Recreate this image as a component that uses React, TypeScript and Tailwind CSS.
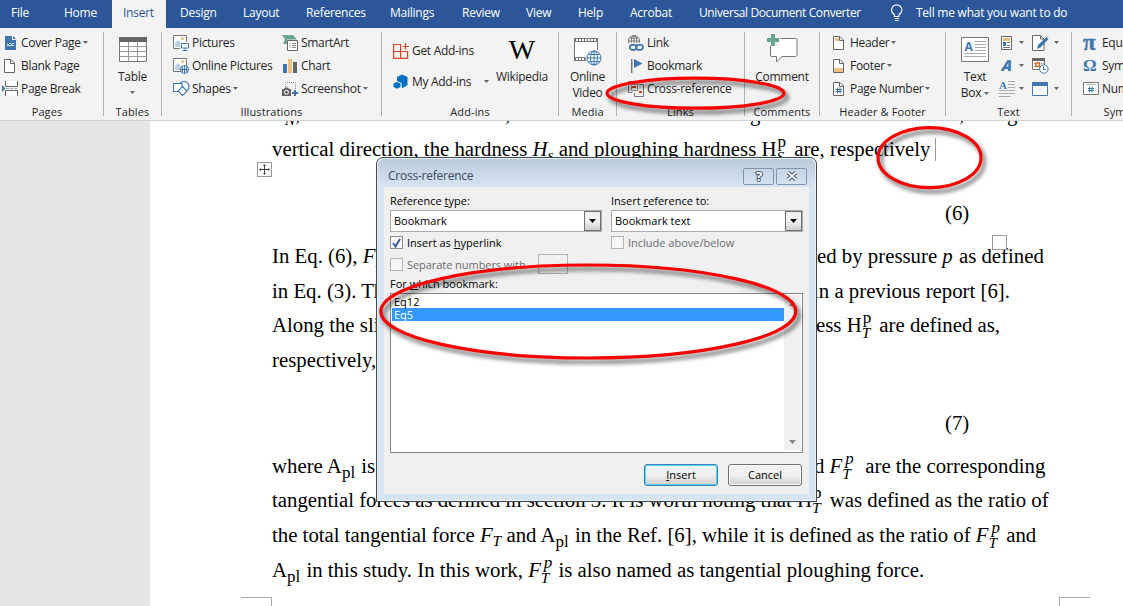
import type { ReactNode } from 'react';

const tabs = [
  { name: 'File', cls: 'pl-[11px] w-[53px]' },
  { name: 'Home', cls: 'pl-[11px] w-[59px]' },
  { name: 'Insert', cls: 'pl-[11px] w-[54px] bg-[#f3f3f3] text-[#2b579a]' },
  { name: 'Design', cls: 'pl-[14px] w-[63px]' },
  { name: 'Layout', cls: 'pl-[14px] w-[63px]' },
  { name: 'References', cls: 'pl-[14px] w-[84px]' },
  { name: 'Mailings', cls: 'pl-[14px] w-[72px]' },
  { name: 'Review', cls: 'pl-[14px] w-[64px]' },
  { name: 'View', cls: 'pl-[14px] w-[52px]' },
  { name: 'Help', cls: 'pl-[14px] w-[52px]' },
  { name: 'Acrobat', cls: 'pl-[14px] w-[69px]' },
  { name: 'Universal Document Converter', cls: 'pl-[14px] w-[205px] tracking-[-0.032em]' },
];

function Caret({ className = '' }: { className?: string }) {
  return (
    <svg width="5" height="3" viewBox="0 0 5 3" className={`shrink-0 ${className}`}>
      <path d="M0 0h5L2.5 3z" fill="#666" />
    </svg>
  );
}

/* ---------- ribbon icons ---------- */

function CoverPageIcon() {
  return (
    <svg width="16" height="16" viewBox="0 0 16 16">
      <path d="M3 1h7v4h4v10H3z" fill="#3e76b0" />
      <path d="M11 1l3 3h-3z" fill="#3e76b0" />
      <path d="M5 8.500l1.500 1L8 8l1.500 1.500L11 8l1 1M5 10.500h7" stroke="#fff" strokeWidth=".8" fill="none" />
    </svg>
  );
}

function PageIcon({ kind }: { kind?: 'header' | 'footer' | 'number' }) {
  return (
    <svg width="16" height="16" viewBox="0 0 16 16">
      <path d="M2.500 1.500h6.500l3.500 3.500v9.500h-10z" fill="#fff" stroke="#666" />
      <path d="M8.500 1.500v4h4" fill="none" stroke="#666" />
      {kind === 'header' && <path d="M4 3h4v3H4z" fill="#eac282" />}
      {kind === 'footer' && <path d="M3 10h9v4H3z" fill="#eac282" />}
      {kind === 'number' && <path d="M6.500 6.500v6M9 6.500v6M4.500 8.500h6.500M4.500 10.500h6.500" stroke="#3e76b0" />}
    </svg>
  );
}

function PageBreakIcon() {
  return (
    <svg width="17" height="17" viewBox="0 0 17 17">
      <path d="M3.500 1v5.500h12V1M3.500 16v-5.500h12V16" fill="#fff" stroke="#666" />
      <path d="M4 8.500h12" stroke="#aaa" strokeDasharray="3 1" />
      <path d="M0 5l3.500 3.500L0 12z" fill="#3e76b0" />
    </svg>
  );
}

function TableIcon() {
  return (
    <svg width="28" height="25" viewBox="0 0 28 25">
      <path d="M.5.5h27v24H.5z" fill="#fff" stroke="#777" />
      <path d="M0 0h28v5H0z" fill="#666" />
      <path d="M1 9.500h26M1 14.500h26M1 19.500h26M9.500 5v19M18.500 5v19" stroke="#999" />
    </svg>
  );
}

function PictureIcon({ online }: { online?: boolean }) {
  return (
    <svg width="16" height="16" viewBox="0 0 16 16">
      <path d="M.5.5h13v13H.5z" fill="#fff" stroke="#777" />
      <circle cx="9.500" cy="3.500" r="1.600" fill="#eac282" />
      <path d="M2 12V8l3-3 3 3v4z" fill="#b9cfe4" />
      {online ? (
        <g fill="#fff" stroke="#3e76b0">
          <circle cx="11.500" cy="11.500" r="4" />
          <path d="M7.500 11.500h8M11.500 7.500v8M9 8.500q2 3 0 6M14 8.500q-2 3 0 6" fill="none" />
        </g>
      ) : (
        <g fill="#fff" stroke="#3e76b0">
          <path d="M7 7h9v9H7z" stroke="none" />
          <path d="M8.500 8.500h7v4.500h-7z" />
          <path d="M12 13v2.500M9.500 15.500h5" />
        </g>
      )}
    </svg>
  );
}

function ShapesIcon() {
  return (
    <svg width="17" height="16" viewBox="0 0 17 16" fill="#fff" stroke="#3e76b0" strokeWidth="1.100">
      <circle cx="11" cy="5.500" r="5" />
      <path d="M.5 2.500h8.500v8H.5z" />
      <path d="M9.500 5.500l4.500 4.500-4.500 4.500L5 10z" />
    </svg>
  );
}

function SmartArtIcon() {
  return (
    <svg width="16" height="16" viewBox="0 0 16 16">
      <path d="M0 0h11l4 4.500H5V9H1l2-4.500z" fill="#6aa58e" />
      <path d="M5.500 5.500h10v10h-10z" fill="#fff" stroke="#666" />
      <path d="M7.500 8.500h1M10 8.500h4M7.500 12.500h1M10 12.500h4M7.500 10.500h1M10 10.500h4" stroke="#888" />
    </svg>
  );
}

function ChartIcon() {
  return (
    <svg width="16" height="16" viewBox="0 0 16 16">
      <path d="M1 6h4v9H1z" fill="#3e76b0" />
      <path d="M6 1h4v14H6z" fill="#eac282" />
      <path d="M11 4h4v11h-4z" fill="#666" />
    </svg>
  );
}

function ScreenshotIcon() {
  return (
    <svg width="16" height="16" viewBox="0 0 16 16">
      <path d="M3.500 6V1.500h10V9" fill="none" stroke="#888" strokeDasharray="1 1" />
      <path d="M0 8h2l1-1.500h3L7 8h2v7H0z" fill="#666" />
      <circle cx="4.500" cy="11.300" r="2" fill="#666" stroke="#fff" />
      <path d="M13 9v6M10 12h6" stroke="#3e76b0" strokeWidth="2" />
    </svg>
  );
}

function GetAddinsIcon() {
  return (
    <svg width="16" height="16" viewBox="0 0 16 16" fill="none" stroke="#d24726" strokeWidth="1.200">
      <path d="M.6 1.500h7v7h-7zM.6 8.500h7v6.900h-7zM7.600 8.500h7v6.900h-7zM12.500 0v6.500M9.500 3.500H16" />
    </svg>
  );
}

function MyAddinsIcon() {
  return (
    <svg width="16" height="16" viewBox="0 0 16 16" fill="#0072c6">
      <path d="M9 .5l5.500 2.500v8L9 14.500 8.500 9 4 7V3z" />
      <path d="M.5 9.500l3.500-1.500 3.500 1.500V13L4 14.800.5 13z" />
    </svg>
  );
}

function OnlineVideoIcon() {
  return (
    <svg width="29" height="29" viewBox="0 0 29 29">
      <path d="M1.500 1.500h23v22h-23z" fill="#fff" stroke="#777" />
      <path d="M1 3h24M1 22h12" stroke="#777" strokeWidth="4" />
      <path d="M3 3h21M3 22h9" stroke="#fff" strokeWidth="2" strokeDasharray="2 1" />
      <g fill="#fff" stroke="#3e76b0">
        <circle cx="21" cy="21" r="8.500" fill="#f3f3f3" stroke="none" />
        <circle cx="21" cy="21" r="7" />
        <path d="M14 21h14M21 14v14M15.500 17.500h11M15.500 24.500h11" fill="none" />
        <ellipse cx="21" cy="21" rx="3.500" ry="7" fill="none" />
      </g>
    </svg>
  );
}

function LinkIcon() {
  return (
    <svg width="16" height="16" viewBox="0 0 16 16" fill="none">
      <g stroke="#777">
        <circle cx="6" cy="6" r="5.500" fill="#fff" />
        <path d="M.5 6h11M6 .5v11M1.500 3.200h9M1.500 8.800h4" />
        <ellipse cx="6" cy="6" rx="2.800" ry="5.500" />
      </g>
      <path d="M1 8h15v8H1z" fill="#f3f3f3" />
      <rect x="1.800" y="9.800" width="7" height="5" rx="2.500" stroke="#3e76b0" strokeWidth="1.700" />
      <rect x="8" y="9.800" width="7" height="5" rx="2.500" stroke="#3e76b0" strokeWidth="1.700" />
    </svg>
  );
}

function BookmarkIcon() {
  return (
    <svg width="16" height="16" viewBox="0 0 16 16">
      <path d="M3.700 1v14" stroke="#777" strokeWidth="1.500" />
      <path d="M6 1l8.500 4.500L6 10z" fill="#3e76b0" />
    </svg>
  );
}

function CrossReferenceIcon() {
  return (
    <svg width="16" height="16" viewBox="0 0 16 16">
      <path d="M4.500 11.500h-4V.500h10v2" fill="none" stroke="#777" />
      <path d="M3.500 3.500h6v6h-6z" fill="#fff" stroke="#999" />
      <path d="M10.500 3.500h5v12h-9V12" fill="none" stroke="#777" />
      <path d="M4 5h4v2H4zM11 10h3v2h-3z" fill="#d24726" />
    </svg>
  );
}

function CommentIcon() {
  return (
    <svg width="31" height="30" viewBox="0 0 31 30">
      <path d="M3.500 5.500q0-1 1-1h24q1.500 0 1.500 1.500v15q0 1.500-1.500 1.500H15L9.500 28v-5.500H5q-1.500 0-1.500-1.500z" fill="#fff" stroke="#777" />
      <path d="M0 3h13v9H0z" fill="#f3f3f3" />
      <path d="M4 0h4v4h4v4H8v4H4V8H0V4h4z" fill="#6aa58e" />
    </svg>
  );
}

function TextBoxIcon() {
  return (
    <svg width="28" height="25" viewBox="0 0 28 25">
      <path d="M.5.5h27v24H.5z" fill="#fff" stroke="#777" />
      <path d="M14 4.500h11M14 7.500h11M14 10.500h11M14 13.500h11M3 16.500h22M3 19.500h22" stroke="#aaa" />
      <text x="3.500" y="13.500" fontSize="12" fontWeight="700" fill="#3e76b0" className="font-['Open_Sans']">A</text>
    </svg>
  );
}

function QuickPartsIcon() {
  return (
    <svg width="16" height="16" viewBox="0 0 16 16">
      <path d="M2.500 1.500h10v13h-10z" fill="#fff" stroke="#666" />
      <path d="M4 3h7v3H4z" fill="#eac282" />
      <path d="M4 7h3v4H4z" fill="#3e76b0" />
      <path d="M8 7.500h3M8 10.500h3M4 12.500h7" stroke="#777" />
    </svg>
  );
}

function DropCapIcon() {
  return (
    <svg width="16" height="17" viewBox="0 0 16 17">
      <path d="M9 1.500h7M9 4.500h7M9 7.500h7M0 10.500h16M0 13.500h16M0 16.500h12" stroke="#aaa" />
      <text x="0" y="8.500" fontSize="11" fontWeight="700" fill="#3e76b0" className="font-['Liberation_Serif']">A</text>
    </svg>
  );
}

function SignatureIcon() {
  return (
    <svg width="17" height="16" viewBox="0 0 17 16">
      <path d="M.5.500h8l3.500 3.500v11.500H.5z" fill="#fff" stroke="#666" />
      <path d="M8.500.500V4H12" fill="none" stroke="#666" />
      <path d="M5 14l1-4 8.500-8 2 2L8.500 12.500z" fill="#3e76b0" />
    </svg>
  );
}

function DateTimeIcon() {
  return (
    <svg width="17" height="17" viewBox="0 0 17 17">
      <path d="M.5 1.500h12v11H.5z" fill="#fff" stroke="#777" />
      <path d="M0 1h13v3H0z" fill="#666" />
      <path d="M2 6.500h2M2 9.500h2M9 6.500h3" stroke="#999" strokeDasharray="1 1" />
      <path d="M4 6h3.500v3.500H4z" fill="none" stroke="#d9631e" strokeWidth="1.500" />
      <circle cx="11.800" cy="12" r="4.200" fill="#fff" stroke="#3e76b0" />
      <path d="M11.500 9.500v3h2.500" fill="none" stroke="#3e76b0" />
    </svg>
  );
}

function ObjectIcon() {
  return (
    <svg width="17" height="14" viewBox="0 0 17 14">
      <path d="M.5.500h15v13H.5z" fill="#fff" stroke="#3e76b0" />
      <path d="M0 0h16v4H0z" fill="#3e76b0" />
    </svg>
  );
}

function NumberIcon() {
  return (
    <svg width="16" height="13" viewBox="0 0 16 13">
      <path d="M.5.500h15v12H.5z" fill="#fff" stroke="#777" />
      <path d="M3 2.500h10" stroke="#bbb" />
      <path d="M6.500 4.500v6M9 4.500v6M5 6.500h6M5 8.500h6" stroke="#3e76b0" />
    </svg>
  );
}

/* ---------- ribbon layout ---------- */

interface RibbonGroupProps {
  label: string;
  width: string;
  children: ReactNode;
  labelCls?: string;
}

function RibbonGroup({ label, width, children, labelCls = '' }: RibbonGroupProps) {
  return (
    <div className={`flex shrink-0 ${width}`}>
      <div className="flex min-w-0 flex-1 flex-col">
        <div className="flex h-[76px] pt-[3px]">{children}</div>
        <div className={`h-4 whitespace-nowrap text-center text-[11px] leading-4 tracking-[0.01em] ${labelCls}`}>{label}</div>
      </div>
      <div className="mt-1 h-[84px] w-px bg-[#b1b1b1]" />
    </div>
  );
}

interface CommandProps {
  icon: ReactNode;
  label: string;
  caret?: boolean;
}

function Command({ icon, label, caret }: CommandProps) {
  return (
    <div className="flex h-[23px] items-center whitespace-nowrap">
      <span className="flex w-[19px] shrink-0">{icon}</span>
      <span>{label}</span>
      {caret && <Caret className="ml-[2px]" />}
    </div>
  );
}

function Ribbon() {
  return (
    <div className="flex h-[93px] overflow-hidden border-b border-[#d2d2d2] bg-[#f3f3f3] text-[12px] tracking-[-0.025em] text-[#262626]">
      <RibbonGroup label="Pages" width="w-[104px]" labelCls="pr-[9px]">
        <div className="flex flex-col pl-[2px]">
          <Command icon={<CoverPageIcon />} label="Cover Page" caret />
          <Command icon={<PageIcon />} label="Blank Page" />
          <Command icon={<PageBreakIcon />} label="Page Break" />
        </div>
      </RibbonGroup>
      <RibbonGroup label="Tables" width="w-[58px]">
        <div className="flex w-full flex-col items-center pt-[6px]">
          <TableIcon />
          <span className="mt-[7px] leading-4">Table</span>
          <Caret className="mt-[6px]" />
        </div>
      </RibbonGroup>
      <RibbonGroup label="Illustrations" width="w-[220px]">
        <div className="flex w-[109px] flex-col pl-[11px]">
          <Command icon={<PictureIcon />} label="Pictures" />
          <Command icon={<PictureIcon online />} label="Online Pictures" />
          <Command icon={<ShapesIcon />} label="Shapes" caret />
        </div>
        <div className="flex flex-col pl-[11px]">
          <Command icon={<SmartArtIcon />} label="SmartArt" />
          <Command icon={<ChartIcon />} label="Chart" />
          <Command icon={<ScreenshotIcon />} label="Screenshot" caret />
        </div>
      </RibbonGroup>
      <RibbonGroup label="Add-ins" width="w-[177px]">
        <div className="flex w-[114px] flex-col gap-2 pl-[11px] pt-2">
          <Command icon={<GetAddinsIcon />} label="Get Add-ins" />
          <div className="flex items-center">
            <Command icon={<MyAddinsIcon />} label="My Add-ins" />
            <Caret className="ml-[13px]" />
          </div>
        </div>
        <div className="flex flex-col items-center pt-[2px]">
          <span className="font-['Liberation_Serif'] text-[28px] leading-[34px] tracking-normal text-black">W</span>
          <span className="mt-[2px] leading-4">Wikipedia</span>
        </div>
      </RibbonGroup>
      <RibbonGroup label="Media" width="w-[58px]">
        <div className="flex w-full flex-col items-center pt-[6px]">
          <OnlineVideoIcon />
          <span className="mt-[3px] text-center leading-4">
            Online
            <br />
            Video
          </span>
        </div>
      </RibbonGroup>
      <RibbonGroup label="Links" width="w-[128px]">
        <div className="flex flex-col pl-[11px]">
          <Command icon={<LinkIcon />} label="Link" />
          <Command icon={<BookmarkIcon />} label="Bookmark" />
          <Command icon={<CrossReferenceIcon />} label="Cross-reference" />
        </div>
      </RibbonGroup>
      <RibbonGroup label="Comments" width="w-[75px]">
        <div className="flex w-full flex-col items-center pt-[3px]">
          <CommentIcon />
          <span className="mt-[5px] leading-4">Comment</span>
        </div>
      </RibbonGroup>
      <RibbonGroup label="Header & Footer" width="w-[126px]">
        <div className="flex flex-col pl-[11px]">
          <Command icon={<PageIcon kind="header" />} label="Header" caret />
          <Command icon={<PageIcon kind="footer" />} label="Footer" caret />
          <Command icon={<PageIcon kind="number" />} label="Page Number" caret />
        </div>
      </RibbonGroup>
      <RibbonGroup label="Text" width="w-[126px]">
        <div className="flex w-[53px] flex-col items-center pl-[5px] pt-[6px]">
          <TextBoxIcon />
          <span className="mt-[7px] leading-4">Text</span>
          <span className="flex items-center leading-4">
            Box
            <Caret className="ml-[3px]" />
          </span>
        </div>
        <div className="flex w-[33px] flex-col">
          <div className="flex h-[23px] items-center gap-1">
            <QuickPartsIcon />
            <Caret />
          </div>
          <div className="flex h-[23px] items-center gap-1">
            <span className="w-4 -skew-x-6 text-center text-[15px] font-extrabold italic text-[#3e76b0]">A</span>
            <Caret />
          </div>
          <div className="flex h-[23px] items-center gap-1">
            <DropCapIcon />
            <Caret />
          </div>
        </div>
        <div className="flex flex-col">
          <div className="flex h-[23px] items-center gap-[5px]">
            <SignatureIcon />
            <Caret />
          </div>
          <div className="flex h-[23px] items-center">
            <DateTimeIcon />
          </div>
          <div className="flex h-[23px] items-center gap-[5px]">
            <ObjectIcon />
            <Caret />
          </div>
        </div>
      </RibbonGroup>
      <RibbonGroup label="Symbols" width="w-[104px]" labelCls="pl-1">
        <div className="flex flex-col pl-[11px]">
          <Command
            icon={<span className="font-['Liberation_Serif'] text-[23px] font-bold leading-4 text-[#3e76b0] [-webkit-text-stroke:0.4px_#3e76b0]">π</span>}
            label="Equation"
            caret
          />
          <Command
            icon={<span className="font-['Liberation_Serif'] text-[17px] font-bold leading-4 text-[#3e76b0]">Ω</span>}
            label="Symbol"
            caret
          />
          <Command icon={<NumberIcon />} label="Number" />
        </div>
      </RibbonGroup>
    </div>
  );
}

function TabBar() {
  return (
    <div className="flex h-7 overflow-hidden bg-[#2b579a] text-[12px] tracking-[-0.02em] text-white">
      {tabs.map((tab) => (
        <div key={tab.name} className={`shrink-0 whitespace-nowrap leading-[26px] ${tab.cls}`}>
          {tab.name}
        </div>
      ))}
      <svg width="14" height="18" viewBox="0 0 14 18" className="mt-1 shrink-0" fill="none" stroke="#fff" strokeWidth="1.200">
        <path d="M4.500 12.500V11Q1.500 8.500 1.500 6a5.200 5.200 0 0 1 10.400 0q0 2.500-3 5v1.500zM4.500 14.500h4.500M5 16.500h3.500" />
      </svg>
      <div className="ml-3 shrink-0 whitespace-nowrap leading-[26px]">Tell me what you want to do</div>
    </div>
  );
}

/* ---------- document ---------- */

interface SymProps {
  base: string;
  sub?: string;
  sup?: string;
  upright?: boolean;
}

// Math symbol with stacked super- and subscript
function Sym({ base, sub, sup, upright }: SymProps) {
  return (
    <span className="inline-flex items-baseline">
      <span className={upright ? '' : 'italic'}>{base}</span>
      <span className={`relative text-[15.500px] ${sup ? 'min-w-[12.500px]' : ''}`}>
        <span className={`relative italic ${sup ? 'top-[6px]' : 'top-[4px]'}`}>{sub}</span>
        {sup && (
          <span className={`absolute -top-[9px] ${upright ? 'left-px text-[17px]' : 'left-[3px] text-[17px] italic'}`}>{sup}</span>
        )}
      </span>
    </span>
  );
}

function Apl() {
  return (
    <span>
      A<span className="relative top-[5px] pr-px text-[17px]">pl</span>
    </span>
  );
}

// Left part runs under the dialog, right part comes out on its other side
function Line({ left, right }: { left?: ReactNode; right?: ReactNode }) {
  return (
    <div className="flex h-[34.700px] whitespace-pre leading-[34.700px]">
      <div className="w-[545px] shrink-0">{left}</div>
      <div>{right}</div>
    </div>
  );
}

function DocumentPage() {
  return (
    <div className="relative flex h-[485px] overflow-hidden bg-[#e6e6e6]">
      <div className="ml-[150px] flex-1 bg-white pl-[122px] font-['Liberation_Serif','Times_New_Roman',serif] text-[20.800px] text-black">
        <div className="-mt-[24px] flex h-[34.700px] whitespace-pre leading-[34.700px]">
          <span className="w-[233px]"><Sym base="F" sub="N" />,</span>
          <span className="w-[245px]">,</span>
          <span className="w-[209px]">g</span>
          <span className="w-[48px]">,</span>
          <span>g</span>
        </div>
        <div className="flex h-[34.700px] whitespace-pre leading-[34.700px]">
          <span>
            vertical direction, the hardness <Sym base="H" sub="s" /> and ploughing hardness <Sym base="H" sub="S" sup="p" upright /> are, respectively
          </span>
          <span className="ml-[5px] mt-[6px] h-[23px] w-px bg-[#999]" />
        </div>
        <div className="mt-[30px] h-[34.700px] pl-[673px] leading-[34.700px]">(6)</div>
        <div className="h-[8px]" />
        <Line left={<>In Eq. (6), <Sym base="F" sub="N" /></>} right={<>ed by pressure <i className="pr-px">p</i> as defined</>} />
        <Line left="in Eq. (3). The" right={<span className="-ml-1">in a previous report [6].</span>} />
        <Line left="Along the sliding" right={<span className="-ml-px">ess <Sym base="H" sub="T" sup="p" upright /> are defined as,</span>} />
        <Line left="respectively," />
        <div className="mt-[28px] h-[34.700px] pl-[673px] leading-[34.700px]">(7)</div>
        <div className="h-[8px]" />
        <Line left={<>where <Apl /> is</>} right={<span className="-ml-[3px]">d <Sym base="F" sub="T" sup="p" />  are the corresponding</span>} />
        <div className="h-[34.700px] whitespace-pre leading-[34.700px]">
          tangential forces as defined in section 3. It is worth noting that <Sym base="H" sub="T" sup="p" upright /> was defined as the ratio of
        </div>
        <div className="h-[34.700px] whitespace-pre leading-[34.700px]">
          the total tangential force <Sym base="F" sub="T" /> and <Apl /> in the Ref. [6], while it is defined as the ratio of <Sym base="F" sub="T" sup="p" /> and
        </div>
        <div className="h-[34.700px] whitespace-pre leading-[34.700px]">
          <Apl /> in this study. In this work, <Sym base="F" sub="T" sup="p" /> is also named as tangential ploughing force.
        </div>
      </div>

      {/* table handles */}
      <div className="absolute left-[257px] top-[41px] flex size-[15px] items-center justify-center border border-[#999] bg-white">
        <svg width="11" height="11" viewBox="0 0 11 11" stroke="#444" fill="#444">
          <path d="M5.500 1v9M1 5.500h9" />
          <path d="M5.500 0l1.500 2H4zM5.500 11L4 9h3zM0 5.500L2 4v3zM11 5.500L9 7V4z" stroke="none" />
        </svg>
      </div>
      <div className="absolute left-[992px] top-[114px] size-[15px] border border-[#999] bg-white" />

      {/* margin corners */}
      <div className="absolute bottom-0 left-[241px] h-[9px] w-[31px] border-r border-t border-[#aaa]" />
      <div className="absolute bottom-0 left-[1059px] h-[9px] w-[31px] border-l border-t border-[#aaa]" />
    </div>
  );
}

/* ---------- dialog ---------- */

function Combo({ value, width }: { value: string; width: string }) {
  return (
    <div className={`flex h-[22px] items-stretch border border-[#abadb3] bg-white ${width}`}>
      <span className="flex-1 pl-[3px] leading-5">{value}</span>
      <span className="flex w-[17px] items-center justify-center border border-[#707070] bg-linear-to-b from-[#f2f2f2] from-50% to-[#cfcfcf]">
        <svg width="7" height="4" viewBox="0 0 7 4">
          <path d="M0 0h7L3.500 4z" />
        </svg>
      </span>
    </div>
  );
}

function Check({ label, checked }: { label: ReactNode; checked?: boolean }) {
  return (
    <div className={`flex h-[15px] items-center leading-[15px] ${checked ? 'text-black' : 'text-[#6d6d6d]'}`}>
      <span className={`mr-1 flex size-[13px] items-center justify-center border bg-[#f6f6f6] ${checked ? 'border-[#8e8f8f]' : 'border-[#b5b5b5]'}`}>
        {checked && (
          <svg width="9" height="10" viewBox="0 0 9 10">
            <path d="M1 5l2.500 3.500L8 1" fill="none" stroke="#3f5a9c" strokeWidth="2" />
          </svg>
        )}
      </span>
      {label}
    </div>
  );
}

function CrossReferenceDialog() {
  return (
    <div className="absolute left-[376px] top-[157px] flex h-[345px] w-[441px] flex-col rounded-t-[7px] border border-[#3f474f] bg-[#d7e4f2] px-[7px] pb-[7px] text-[11px] text-black shadow-[inset_0_0_0_1px_#e9f1f9]">
      <div className="-mx-[6px] mt-px flex h-[28px] items-center rounded-t-[6px] bg-linear-to-b from-[#bccbdb] to-[#d7e4f2] pl-[10px] pr-[8px] text-[12px] text-[#3b4d5f]">
        <span className="flex-1 pt-[5px] tracking-[-0.02em]">Cross-reference</span>
        <span className="mr-[2px] mt-[6px] flex h-[17px] w-[31px] items-center justify-center rounded-[2px] border border-[#8395ad]">
          <svg width="12" height="14" viewBox="0 0 12 14">
            <text
              x="6"
              y="11.500"
              textAnchor="middle"
              fontSize="13"
              fontWeight="700"
              fill="#fff"
              stroke="#4b5a70"
              strokeWidth="2"
              paintOrder="stroke"
            >
              ?
            </text>
          </svg>
        </span>
        <span className="mt-[6px] flex h-[17px] w-[31px] items-center justify-center rounded-[2px] border border-[#8395ad]">
          <svg width="12" height="10" viewBox="0 0 12 10">
            <path d="M2 1.500l8 7M10 1.500l-8 7" stroke="#4b5a70" strokeWidth="4" />
            <path d="M2 1.500l8 7M10 1.500l-8 7" stroke="#fff" strokeWidth="1.800" />
          </svg>
        </span>
      </div>

      <div className="flex flex-1 flex-col bg-[#f0f0f0] pl-[6px] pr-[6px] pt-[6px]">
        <div className="flex">
          <div className="flex w-[221px] flex-col">
            <div className="h-[17px] leading-4">Reference <u>t</u>ype:</div>
            <Combo value="Bookmark" width="w-[212px]" />
            <div className="mt-[3px]">
              <Check checked label={<span>Insert as <u>h</u>yperlink</span>} />
            </div>
            <div className="mt-[4px] flex items-center">
              <div className="w-[148px] tracking-[-0.005em]">
                <Check label="Separate numbers with" />
              </div>
              <span className="h-[20px] w-[30px] border border-[#b5b5b5]" />
            </div>
          </div>
          <div className="flex flex-col">
            <div className="h-[17px] leading-4">Insert <u>r</u>eference to:</div>
            <Combo value="Bookmark text" width="w-[192px]" />
            <div className="mt-[3px]">
              <Check label="Include above/below" />
            </div>
          </div>
        </div>
        <div className="mt-[2px] h-[17px] leading-4">For <u>w</u>hich bookmark:</div>
        <div className="flex h-[160px] border border-[#828790] bg-white p-px">
          <div className="flex-1 leading-[13px]">
            <div className="h-[13px] pl-[2px]">Eq12</div>
            <div className="h-[13px] bg-[#3399ff] pl-[2px] text-white">Eq5</div>
          </div>
          <div className="flex w-[17px] flex-col items-center justify-between bg-[#f0f0f0] py-[7px]">
            <svg width="7" height="4" viewBox="0 0 7 4">
              <path d="M0 4h7L3.500 0z" fill="#888" />
            </svg>
            <svg width="7" height="4" viewBox="0 0 7 4">
              <path d="M0 0h7L3.500 4z" fill="#888" />
            </svg>
          </div>
        </div>
        <div className="mt-[11px] flex justify-end gap-[10px] pr-px text-center leading-5">
          <button className="h-[22px] w-[74px] rounded-[3px] border border-[#3c7fb1] bg-linear-to-b from-[#f1f1f1] from-50% to-[#cfcfcf] shadow-[inset_0_0_0_1px_#48d8fb]">
            <u>I</u>nsert
          </button>
          <button className="h-[22px] w-[74px] rounded-[3px] border border-[#707070] bg-linear-to-b from-[#f1f1f1] from-50% to-[#cfcfcf] shadow-[inset_0_0_0_1px_#fcfcfc]">
            Cancel
          </button>
        </div>
      </div>
    </div>
  );
}

// Hand-placed red rings over the window
function Annotations() {
  return (
    <svg width="1123" height="606" viewBox="0 0 1123 606" className="pointer-events-none absolute left-0 top-0 drop-shadow-[3px_4px_2px_rgba(0,0,0,0.6)]">
      <g fill="none" stroke="#f80000" strokeWidth="3.200">
        <ellipse cx="695.500" cy="93.200" rx="88.500" ry="15" />
        <ellipse cx="929.500" cy="157.700" rx="51.500" ry="30" />
        <ellipse cx="588.300" cy="311.500" rx="207.500" ry="46.500" />
      </g>
    </svg>
  );
}

export default function App() {
  return (
    <div className="relative h-[606px] w-[1123px] overflow-hidden font-['Open_Sans','Noto_Sans',sans-serif]">
      <TabBar />
      <Ribbon />
      <DocumentPage />
      <CrossReferenceDialog />
      <Annotations />
    </div>
  );
}
